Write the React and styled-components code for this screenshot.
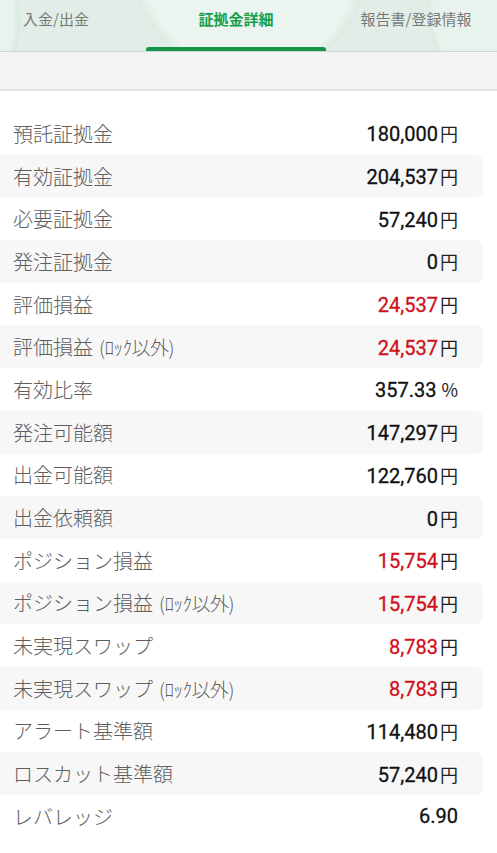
import styled, { createGlobalStyle } from "styled-components";

const GlobalStyle = createGlobalStyle`
  body {
    margin: 0;
    background: #ffffff;
    font-family: Roboto, "Noto Sans CJK JP", sans-serif;
  }
`;

const Page = styled.div`
  width: 497px;
  min-height: 853px;
  overflow: hidden;
  background: #ffffff;
`;

const TabBar = styled.div`
  height: 51px;
  display: flex;
  overflow: hidden;
  border-bottom: 1px solid #cfd6d2;
  background-color: #e2ede7;
  background-image:
    radial-gradient(circle at 250px -40px, rgba(238, 246, 241, 0.8) 0 108px, rgba(216, 235, 224, 0.7) 118px, transparent 120px),
    radial-gradient(circle at 520px 10px, rgba(234, 244, 238, 0.8) 0 86px, rgba(216, 235, 224, 0.7) 92px, transparent 94px),
    radial-gradient(circle at -80px 20px, rgba(234, 244, 238, 0.8) 0 93px, rgba(212, 233, 221, 0.7) 99px, transparent 101px);
`;

const TabTrack = styled.div`
  display: flex;
  margin-left: -34px;
`;

const Tab = styled.div`
  flex: 0 0 180px;
  display: flex;
  justify-content: center;
  padding-top: 9px;
  box-sizing: border-box;
  position: relative;
  font-family: "Noto Sans CJK JP", sans-serif;
  font-size: 15px;
  line-height: 20px;
  font-weight: ${(p) => (p.$active ? 700 : 400)};
  color: ${(p) => (p.$active ? "#16a04b" : "#777a79")};

  &::after {
    content: "";
    display: ${(p) => (p.$active ? "block" : "none")};
    position: absolute;
    left: 0;
    right: 0;
    bottom: 0;
    height: 4px;
    border-radius: 3px 3px 0 0;
    background: #169446;
  }
`;

const Band = styled.div`
  height: 37px;
  background: #f2f5f4;
  border-bottom: 2px solid #e3e5e4;
`;

const List = styled.div`
  padding-top: 21px;
`;

const Row = styled.div`
  height: 42.7px;
  display: flex;
  align-items: center;
  justify-content: space-between;
  margin-right: 14px;
  padding: 0 25px 0 13px;
  border-radius: 0 7px 7px 0;
  background: ${(p) => (p.$striped ? "#f7f7f7" : "transparent")};
`;

const Label = styled.div`
  font-family: "Noto Sans CJK JP", sans-serif;
  font-size: 20px;
  font-weight: 300;
  color: #5e5e5e;
  white-space: nowrap;
`;

const Note = styled.span`
  font-size: 19px;
  margin-left: 6px;
  letter-spacing: -0.5px;
`;

const Value = styled.div`
  display: flex;
  align-items: baseline;
  font-family: Roboto, sans-serif;
  font-size: 20px;
  font-weight: 400;
  color: ${(p) => (p.$red ? "#d0101a" : "#111111")};
  -webkit-text-stroke: 0.3px currentColor;
`;

const Unit = styled.span`
  font-family: "Noto Sans CJK JP", sans-serif;
  font-size: 18px;
  font-weight: 400;
  color: #222222;
  -webkit-text-stroke: 0;
  margin-left: ${(p) => (p.$gap ? "5px" : "2px")};
`;

const rows = [
  { label: "預託証拠金", value: "180,000", unit: "円" },
  { label: "有効証拠金", value: "204,537", unit: "円" },
  { label: "必要証拠金", value: "57,240", unit: "円" },
  { label: "発注証拠金", value: "0", unit: "円" },
  { label: "評価損益", value: "24,537", unit: "円", red: true },
  { label: "評価損益", note: "(ﾛｯｸ以外)", value: "24,537", unit: "円", red: true },
  { label: "有効比率", value: "357.33", unit: "%" },
  { label: "発注可能額", value: "147,297", unit: "円" },
  { label: "出金可能額", value: "122,760", unit: "円" },
  { label: "出金依頼額", value: "0", unit: "円" },
  { label: "ポジション損益", value: "15,754", unit: "円", red: true },
  { label: "ポジション損益", note: "(ﾛｯｸ以外)", value: "15,754", unit: "円", red: true },
  { label: "未実現スワップ", value: "8,783", unit: "円", red: true },
  { label: "未実現スワップ", note: "(ﾛｯｸ以外)", value: "8,783", unit: "円", red: true },
  { label: "アラート基準額", value: "114,480", unit: "円" },
  { label: "ロスカット基準額", value: "57,240", unit: "円" },
  { label: "レバレッジ", value: "6.90" },
];

export default function App() {
  return (
    <Page>
      <GlobalStyle />
      <TabBar>
        <TabTrack>
          <Tab>入金/出金</Tab>
          <Tab $active>証拠金詳細</Tab>
          <Tab>報告書/登録情報</Tab>
        </TabTrack>
      </TabBar>
      <Band />
      <List>
        {rows.map((r, i) => (
          <Row key={i} $striped={i % 2 === 1}>
            <Label>
              {r.label}
              {r.note && <Note>{r.note}</Note>}
            </Label>
            <Value $red={r.red}>
              {r.value}
              {r.unit && <Unit $gap={r.unit === "%"}>{r.unit}</Unit>}
            </Value>
          </Row>
        ))}
      </List>
    </Page>
  );
}
